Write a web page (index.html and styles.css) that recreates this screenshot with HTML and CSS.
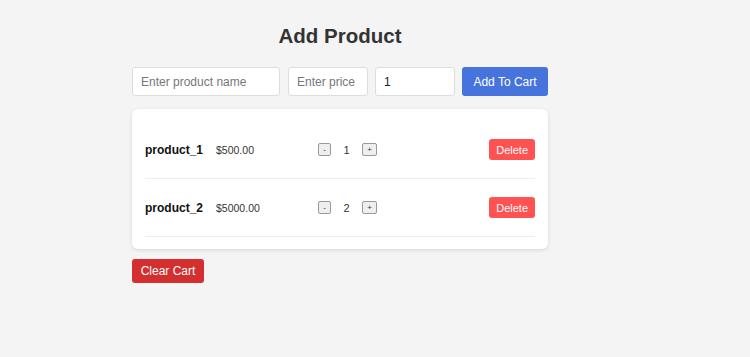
FILE: index.html
```html
<!DOCTYPE html>
<html lang="en">
<head>
  <meta charset="UTF-8">
  <meta name="viewport" content="width=device-width, initial-scale=1.0">
  <title>Cart</title>
  <link rel="stylesheet" href="styles.css">
</head>
<body>

  <div class="app">
    <h1>Add Product</h1>

    <div class="add-form">
      <input type="text" class="name-input" placeholder="Enter product name">
      <input type="text" class="price-input" placeholder="Enter price">
      <input type="number" class="qty-input" value="1">
      <button class="add-btn">Add To Cart</button>
    </div>

    <div class="cart">
      <div class="cart-item">
        <div class="info">
          <span class="name">product_1</span>
          <span class="price">$500.00</span>
        </div>
        <div class="qty">
          <button class="qty-btn">-</button>
          <span class="qty-value">1</span>
          <button class="qty-btn plus">+</button>
        </div>
        <button class="delete-btn">Delete</button>
      </div>
      <div class="cart-item">
        <div class="info">
          <span class="name">product_2</span>
          <span class="price">$5000.00</span>
        </div>
        <div class="qty">
          <button class="qty-btn">-</button>
          <span class="qty-value">2</span>
          <button class="qty-btn plus">+</button>
        </div>
        <button class="delete-btn">Delete</button>
      </div>
    </div>

    <button class="clear-btn">Clear Cart</button>
  </div>

</body>
</html>
```

FILE: styles.css
```css
body {
  font-family: 'Liberation Sans', Arial, sans-serif;
  background-color: #f4f4f4;
  margin: 0;
  color: #333;
}

.app {
  width: 416px;
  margin: 0 0 0 132px;
  padding-top: 22px;
}

h1 {
  text-align: center;
  font-size: 20.5px;
  font-weight: bold;
  color: #333;
  margin: 0 0 17px;
  line-height: 28px;
}

.add-form {
  display: flex;
  gap: 7px;
  margin-bottom: 13px;
}

.add-form input {
  box-sizing: border-box;
  height: 29px;
  padding: 0 8px;
  font-family: inherit;
  font-size: 12px;
  color: #222;
  background: #fff;
  border: 1px solid #ddd;
  border-radius: 3px;
  outline: none;
}

.add-form input::placeholder {
  color: #777;
}

.name-input {
  width: 148px;
  margin-right: 1px;
}

.price-input,
.qty-input {
  width: 80px;
}

.qty-input {
  font-size: 11.5px;
}

.qty-input::-webkit-inner-spin-button {
  -webkit-appearance: none;
}

.add-btn {
  flex: 1;
  height: 29px;
  background-color: #4674dc;
  color: #fff;
  border: none;
  border-radius: 3px;
  font-family: inherit;
  font-size: 12px;
  cursor: pointer;
}

.cart {
  background: #fff;
  border-radius: 6px;
  box-shadow: 0 1px 4px rgba(0, 0, 0, 0.12);
  padding: 12px 13px 12px;
}

.cart-item {
  display: flex;
  align-items: center;
  height: 57px;
  border-bottom: 1px solid #eee;
}

.info {
  width: 173px;
  display: flex;
  align-items: center;
  gap: 13px;
}

.name {
  font-size: 12px;
  font-weight: bold;
  color: #111;
}

.price {
  font-size: 10.5px;
  color: #333;
}

.qty {
  display: flex;
  align-items: center;
}

.qty-btn {
  width: 13px;
  height: 13px;
  padding: 0;
  font-size: 8px;
  line-height: 10px;
  background: #efefef;
  border: 1px solid #999;
  border-radius: 2px;
  color: #333;
  font-family: inherit;
}

.qty-btn.plus {
  width: 15px;
}

.qty-value {
  width: 31px;
  text-align: center;
  font-size: 11px;
  color: #333;
}

.delete-btn {
  margin-left: auto;
  background-color: #ff5252;
  color: #fff;
  border: none;
  border-radius: 3px;
  height: 21px;
  padding: 0 7px;
  font-family: inherit;
  font-size: 11px;
  cursor: pointer;
}

.clear-btn {
  margin-top: 10px;
  background-color: #d32f2f;
  color: #fff;
  border: none;
  border-radius: 3px;
  height: 24px;
  width: 72px;
  font-family: inherit;
  font-size: 12px;
  cursor: pointer;
}
```
